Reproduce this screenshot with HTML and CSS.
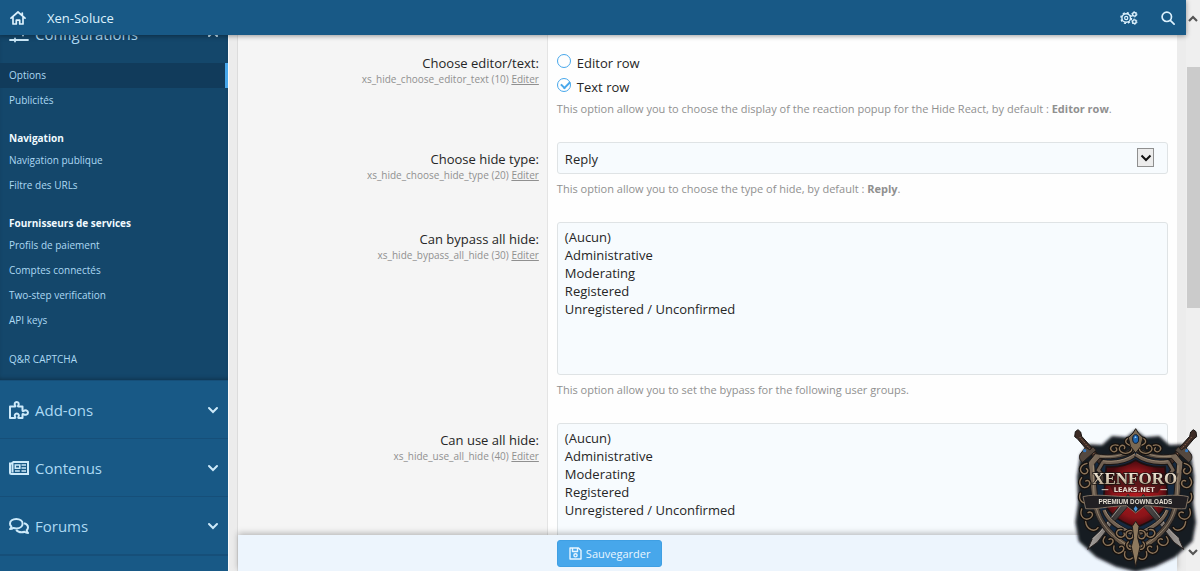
FILE: index.html
```html
<!DOCTYPE html>
<html lang="fr">
<head>
    <meta charset="UTF-8">
    <meta name="viewport" content="width=device-width, initial-scale=1.0">
    <title>Xen-Soluce - Options</title>
    <link rel="stylesheet" href="styles.css">
</head>
<body>
    <div class="app">
        <header class="header">
            <a href="#" class="header-icon" aria-label="Accueil">
                <svg width="16" height="14" viewBox="0 0 16 14" fill="none" stroke="currentColor" stroke-width="1.7" stroke-linejoin="round" stroke-linecap="round">
                    <path d="M1 7.2 8 1l7 6.2M12.3 2v2.5M3 6.5V13h3.3V9.2h3.4V13H13V6.5"/>
                </svg>
            </a>
            <a href="#" class="header-title">Xen-Soluce</a>
            <div class="header-tools">
                <a href="#" aria-label="Outils">
                    <svg width="18" height="14" viewBox="0 0 18 14" fill="none" stroke="currentColor">
                        <circle cx="6.2" cy="7" r="4.3" stroke-width="1.4"/>
                        <circle cx="6.2" cy="7" r="5.3" stroke-width="1.4" stroke-dasharray="2.1 2.06"/>
                        <circle cx="6.2" cy="7" r="1.6" stroke-width="1.2"/>
                        <circle cx="14.4" cy="3.3" r="1.8" stroke-width="1.4"/>
                        <circle cx="14.4" cy="3.3" r="2.6" stroke-width="1" stroke-dasharray="1.4 1.32"/>
                        <circle cx="14.4" cy="10.7" r="1.8" stroke-width="1.4"/>
                        <circle cx="14.4" cy="10.7" r="2.6" stroke-width="1" stroke-dasharray="1.4 1.32"/>
                    </svg>
                </a>
                <a href="#" aria-label="Rechercher">
                    <svg width="14" height="14" viewBox="0 0 14 14" fill="none" stroke="currentColor" stroke-width="1.7" stroke-linecap="round">
                        <circle cx="5.8" cy="5.8" r="4.7"/>
                        <path d="m9.3 9.3 3.8 3.8"/>
                    </svg>
                </a>
            </div>
        </header>

        <div class="main">
            <nav class="sidebar">
                <section class="section open">
                    <a href="#" class="section-title">
                        <svg width="20" height="18" viewBox="0 0 20 18" fill="none" stroke="currentColor" stroke-width="1.8" stroke-linecap="round">
                            <path d="M1 3h18M1 9h18M1 15h18M6 1.5v3M14 7.5v3M6 13.5v3"/>
                        </svg>
                        <span>Configurations</span>
                        <svg class="chevron" width="12" height="8" viewBox="0 0 12 8" fill="none" stroke="currentColor" stroke-width="2" stroke-linecap="round"><path d="m2 6 4-4 4 4"/></svg>
                    </a>
                    <ul>
                        <li><a href="#" class="active">Options</a></li>
                        <li><a href="#">Publicités</a></li>
                    </ul>
                    <h4>Navigation</h4>
                    <ul>
                        <li><a href="#">Navigation publique</a></li>
                        <li><a href="#">Filtre des URLs</a></li>
                    </ul>
                    <h4>Fournisseurs de services</h4>
                    <ul>
                        <li><a href="#">Profils de paiement</a></li>
                        <li><a href="#">Comptes connectés</a></li>
                        <li><a href="#">Two-step verification</a></li>
                        <li><a href="#">API keys</a></li>
                    </ul>
                    <ul class="last">
                        <li><a href="#">Q&amp;R CAPTCHA</a></li>
                    </ul>
                </section>
                <section class="section">
                    <a href="#" class="section-title">
                        <svg width="20" height="18" viewBox="0 0 20 18" fill="none" stroke="currentColor" stroke-width="2" stroke-linejoin="round">
                            <path d="M1 5.6h4.9c.6 0 .7-.6.3-1.1-1.2-1.5-.3-3.5 1.5-3.5s2.7 2 1.5 3.5c-.4.5-.3 1.1.3 1.1h4v4c0 .7.7.8 1.2.4 1.700-1.300 4.300-.5 4.300 1.600s-2.600 2.900-4.300 1.600c-.5-.4-1.200-.3-1.200.4V17H9.800c-.7 0-.7-.6-.3-1.200.9-1.400.1-3.200-1.700-3.200s-2.600 1.800-1.700 3.200c.4.600.3 1.200-.4 1.200H1z"/>
                        </svg>
                        <span>Add-ons</span>
                        <svg class="chevron" width="12" height="8" viewBox="0 0 12 8" fill="none" stroke="currentColor" stroke-width="2" stroke-linecap="round"><path d="m2 2 4 4 4-4"/></svg>
                    </a>
                </section>
                <section class="section">
                    <a href="#" class="section-title">
                        <svg width="20" height="14" viewBox="0 0 20 14" fill="none" stroke="currentColor" stroke-width="2">
                            <path d="M3.500 1H19v12H2.500C1.500 13 1 12.300 1 11.500V2.500h2.500M3.500 1v10.500"/>
                            <path d="M6.300 4h4.500v3.300H6.300zM12.500 4H17M12.500 7H17M6 10h4.800M12.500 10H17" stroke-width="1.600"/>
                        </svg>
                        <span>Contenus</span>
                        <svg class="chevron" width="12" height="8" viewBox="0 0 12 8" fill="none" stroke="currentColor" stroke-width="2" stroke-linecap="round"><path d="m2 2 4 4 4-4"/></svg>
                    </a>
                </section>
                <section class="section">
                    <a href="#" class="section-title">
                        <svg width="20" height="16" viewBox="0 0 20 16" fill="none" stroke="currentColor" stroke-width="2" stroke-linejoin="round">
                            <path d="M7.300 1c3.600 0 6.300 2 6.300 4.700s-2.700 4.700-6.300 4.700c-1 0-2-.2-2.800-.5-1 .8-2.200 1.200-3.500 1.200.8-.8 1.300-1.600 1.400-2.600C1.500 7.700 1 6.800 1 5.700 1 3 3.700 1 7.300 1z"/>
                            <path d="M15 5.300c2.300.6 4 2.200 4 4.200 0 1.100-.5 2-1.300 2.800.1 1 .6 1.800 1.300 2.600-1.300 0-2.500-.4-3.500-1.200-.9.300-1.800.5-2.800.5-2.400 0-4.400-.9-5.500-2.400"/>
                        </svg>
                        <span>Forums</span>
                        <svg class="chevron" width="12" height="8" viewBox="0 0 12 8" fill="none" stroke="currentColor" stroke-width="2" stroke-linecap="round"><path d="m2 2 4 4 4-4"/></svg>
                    </a>
                </section>
                <section class="section"></section>
            </nav>

            <form class="content">
                <div class="rows">
                    <div class="row">
                        <div class="label">
                            <span class="name" id="editor-label">Choose editor/text:</span>
                            <span class="hint">xs_hide_choose_editor_text (10) <a href="#">Editer</a></span>
                        </div>
                        <div class="field" role="radiogroup" aria-labelledby="editor-label">
                            <label class="choice"><input type="radio" name="editor" value="editor"> Editor row</label>
                            <label class="choice"><input type="radio" name="editor" value="text" checked> Text row</label>
                            <p class="explain">This option allow you to choose the display of the reaction popup for the Hide React, by default : <b>Editor row</b>.</p>
                        </div>
                    </div>
                    <div class="row row-input">
                        <div class="label">
                            <label class="name" for="type">Choose hide type:</label>
                            <span class="hint">xs_hide_choose_hide_type (20) <a href="#">Editer</a></span>
                        </div>
                        <div class="field">
                            <div class="dropdown">
                                <select id="type">
                                    <option>Reply</option>
                                </select>
                                <span class="arrow">
                                    <svg width="12" height="8" viewBox="0 0 12 8" fill="none" stroke="#111" stroke-width="2"><path d="m1.500 1.500 4.500 4.500 4.500-4.500"/></svg>
                                </span>
                            </div>
                            <p class="explain">This option allow you to choose the type of hide, by default : <b>Reply</b>.</p>
                        </div>
                    </div>
                    <div class="row row-input">
                        <div class="label">
                            <label class="name" for="bypass">Can bypass all hide:</label>
                            <span class="hint">xs_hide_bypass_all_hide (30) <a href="#">Editer</a></span>
                        </div>
                        <div class="field">
                            <select id="bypass" multiple size="8">
                                <option>(Aucun)</option>
                                <option>Administrative</option>
                                <option>Moderating</option>
                                <option>Registered</option>
                                <option>Unregistered / Unconfirmed</option>
                            </select>
                            <p class="explain">This option allow you to set the bypass for the following user groups.</p>
                        </div>
                    </div>
                    <div class="row row-input">
                        <div class="label">
                            <label class="name" for="use">Can use all hide:</label>
                            <span class="hint">xs_hide_use_all_hide (40) <a href="#">Editer</a></span>
                        </div>
                        <div class="field">
                            <select id="use" multiple size="8">
                                <option>(Aucun)</option>
                                <option>Administrative</option>
                                <option>Moderating</option>
                                <option>Registered</option>
                                <option>Unregistered / Unconfirmed</option>
                            </select>
                        </div>
                    </div>
                </div>
                <div class="submit">
                    <button type="submit">
                        <svg width="13" height="13" viewBox="0 0 13 13" fill="none" stroke="currentColor" stroke-width="1.400" stroke-linejoin="round">
                            <path d="M1 1h8.500L12 3.500V12H1zM3.500 1v3.500h5V1"/>
                            <circle cx="6.500" cy="8.300" r="1.600"/>
                        </svg>
                        Sauvegarder
                    </button>
                </div>
            </form>
        </div>
    </div>

    <div class="scrollbar">
        <svg width="10" height="7" viewBox="0 0 10 7" fill="none" stroke="#555" stroke-width="2.200"><path d="m1 6 4-4 4 4"/></svg>
        <div class="track"><div class="thumb"></div></div>
        <svg width="10" height="7" viewBox="0 0 10 7" fill="none" stroke="#555" stroke-width="2.200"><path d="m1 1 4 4 4-4"/></svg>
    </div>

    <svg class="badge" width="126" height="144" viewBox="40 36 378 432" role="img" aria-label="Xenforo Leaks.net">
        <defs>
            <linearGradient id="bronze" x1="0" y1="0" x2="1" y2="1">
                <stop offset="0" stop-color="#8a7865"/>
                <stop offset=".5" stop-color="#4a4039"/>
                <stop offset="1" stop-color="#7d6850"/>
            </linearGradient>
            <linearGradient id="steel" x1="0" y1="0" x2="1" y2="0">
                <stop offset="0" stop-color="#a7a3a0"/>
                <stop offset=".5" stop-color="#77716d"/>
                <stop offset=".55" stop-color="#393636"/>
                <stop offset="1" stop-color="#595452"/>
            </linearGradient>
            <radialGradient id="red">
                <stop offset="0" stop-color="#b51b20"/>
                <stop offset=".7" stop-color="#8b1419"/>
                <stop offset="1" stop-color="#45090e"/>
            </radialGradient>
            <linearGradient id="silver" x1="0" y1="0" x2="0" y2="1">
                <stop offset="0" stop-color="#fff8ea"/>
                <stop offset=".55" stop-color="#d5c7b2"/>
                <stop offset="1" stop-color="#a38f78"/>
            </linearGradient>
            <filter id="soft"><feGaussianBlur stdDeviation="4"/></filter>
            <g id="half">
                <!-- sword -->
                <path d="m205 238-80 105-27 28-14 32 29-21 24-31 82-93z" fill="url(#steel)" stroke="#27211f" stroke-width="3"/>
                <path d="m98 371 24-21 78-98" fill="none" stroke="#c7c0b8" stroke-width="2"/>
                <path d="m47 50 8-6 8 7 3 13 65 72-12 12-66-77-8-6z" fill="#3c2b25" stroke="#171311" stroke-width="3"/>
                <path d="m60 66 53 62" stroke="#8b664e" stroke-width="3" stroke-dasharray="5 4"/>
                <path d="m62 117 16-20 13 8 9-10 9 11-40 36c-10-7-12-16-7-25z" fill="#54483f" stroke="#231d1a" stroke-width="3"/>
                <!-- outer frame -->
                <path d="M226 91c-25 22-66 34-119 25l-21 26 10 104c4 62 35 119 130 171v-20c-80-44-108-91-112-148L105 147l15-17c45 5 81-4 106-20z" fill="url(#bronze)" stroke="#1c1817" stroke-width="3"/>
                <path d="M101 151c1 60-1 105 14 145 16 43 52 76 108 107M121 123c43 6 80-5 102-25" fill="none" stroke="#b19d82" stroke-width="2"/>
                <!-- inner frame -->
                <path d="M228 119c-28 20-60 27-98 22l-14 24c12 12 13 23 9 37M133 285c12 35 45 55 95 76" fill="none" stroke="#1b1716" stroke-width="16"/>
                <path d="M228 119c-28 20-60 27-98 22l-14 24c12 12 13 23 9 37M133 285c12 35 45 55 95 76" fill="none" stroke="#706052" stroke-width="9"/>
                <path d="M226 116c-27 18-59 26-96 21M136 285c14 31 45 51 90 70" fill="none" stroke="#b9a68c" stroke-width="2"/>
                <!-- scrollwork -->
                <g fill="none" stroke="#15110f" stroke-width="11" stroke-linecap="round">
                    <path d="M220 74c-18-13-30 8-15 14 14 4 17 18 2 25-18 7-35-8-25-19 8-7 17 0 12 7M175 91c-18-5-26 8-20 15 9 10 22 0 14-8"/>
                    <path d="M82 145c-21 5-25 22-12 30 12 5 19-8 10-14M66 188c-14 19 2 36 18 27 13-10 3-23-6-17M62 235c-8 22 10 35 24 25M66 282c-8 23 10 37 26 27 13-10 3-23-7-16M78 320c3 26 28 32 37 18"/>
                    <path d="M136 365c-13 15 1 33 18 23 13-9 3-21-6-15M163 393c-5 19 14 28 26 16 9-11-2-20-9-13M196 410c-6 19 10 29 22 19M225 352c-13-12-30-3-25 12 5 12 23 8 19-4M187 344c-15-3-22 11-11 20 12 7 22-2 17-10M206 381c-9 8-4 22 8 22"/>
                </g>
                <g fill="none" stroke="#8c7459" stroke-width="4" stroke-linecap="round">
                    <path d="M220 74c-18-13-30 8-15 14 14 4 17 18 2 25-18 7-35-8-25-19 8-7 17 0 12 7M175 91c-18-5-26 8-20 15 9 10 22 0 14-8"/>
                    <path d="M82 145c-21 5-25 22-12 30 12 5 19-8 10-14M66 188c-14 19 2 36 18 27 13-10 3-23-6-17M62 235c-8 22 10 35 24 25M66 282c-8 23 10 37 26 27 13-10 3-23-7-16M78 320c3 26 28 32 37 18"/>
                    <path d="M136 365c-13 15 1 33 18 23 13-9 3-21-6-15M163 393c-5 19 14 28 26 16 9-11-2-20-9-13M196 410c-6 19 10 29 22 19M225 352c-13-12-30-3-25 12 5 12 23 8 19-4M187 344c-15-3-22 11-11 20 12 7 22-2 17-10M206 381c-9 8-4 22 8 22"/>
                </g>
                <circle cx="75" cy="107" r="5" fill="#377ac0"/>
            </g>
        </defs>
        <path d="m228 45-28 22-43-4-30 27-40-2-25 32-10 65 3 80-8 57 10 57 53 48 59 28 59 15 59-15 59-28 53-48 10-57-8-57 3-80-10-65-25-32-40 2-30-27-43 4z" fill="#181b24" filter="url(#soft)"/>
        <path d="M228 93c-27 19-66 32-122 24l-21 29 12 110c7 68 48 117 131 162 83-45 124-94 131-162l12-110-21-29c-56 8-95-5-122-24z" fill="#14283f"/>
        <path d="M228 135c-24 16-55 22-88 20l-8 92c3 43 39 69 96 91 57-22 93-48 96-91l-8-92c-33 2-64-4-88-20z" fill="url(#red)" stroke="#1d1011" stroke-width="5"/>
        <use href="#half"/>
        <use href="#half" transform="matrix(-1 0 0 1 456 0)"/>
        <!-- crest and base -->
        <path d="m228 41 8 13 14 14-7 27-15 19-15-19-7-27 14-14z" fill="#796852" stroke="#1b1716" stroke-width="3"/>
        <ellipse cx="228" cy="72" rx="9" ry="13" fill="#1e65af" stroke="#101c2d" stroke-width="3"/>
        <path d="m224 70 3-7 4 5" fill="#a7d5f5"/>
        <path d="m218 334 10-15 10 15-4 34 7 27-13 60-13-60 7-27z" fill="#8e795e" stroke="#211b18" stroke-width="3"/>
        <!-- lettering -->
        <path d="M103 175h254l-12 33-40 5-10 20H161l-10-20-42-5z" fill="#171314" opacity=".5"/>
        <path d="M70 245c41-10 82 0 158 1 76-1 117-11 158-1l-8 36c-36 3-59-7-122-9l-28 22-28-22c-63 2-86 12-122 9z" fill="#211f22" stroke="#7f7061" stroke-width="3"/>
        <path d="m228 273 6 8-6 9-6-9z" fill="#4b97dd"/>
        <path d="M126 224h20M302 224h20" stroke="#d8cebf" stroke-width="3"/>
        <text class="badge-name" x="225" y="207">XENFORO</text>
        <text class="badge-site" x="224" y="231">LEAKS.NET</text>
        <text class="badge-tag" x="227" y="266">PREMIUM DOWNLOADS</text>
    </svg>
</body>
</html>
```
FILE: styles.css
```css
* {
    box-sizing: border-box;
    padding: 0;
    margin: 0;
}
body {
    display: flex;
    height: 100vh;
    overflow: hidden;
    background: #ececec;
    color: #262626;
    font-family: "Open Sans", "Noto Sans", sans-serif;
    font-size: 13px;
    line-height: 20px;
}
a {
    color: inherit;
    text-decoration: none;
}
ul {
    list-style: none;
}
svg {
    display: block;
    flex: none;
}
.app {
    flex: 1;
    min-width: 0;
    display: flex;
    flex-direction: column;
}

/* header */
.header {
    position: relative;
    z-index: 2;
    flex: none;
    display: flex;
    align-items: center;
    height: 35px;
    padding: 0 11px 0 10px;
    background: #185986;
    color: #dcf1fd;
    box-shadow: 0 1px 5px rgba(0, 0, 0, .4);
}
.header-title {
    margin-left: 21px;
    font-size: 13px;
}
.header-tools {
    display: flex;
    gap: 23px;
    margin-left: auto;
}

/* sidebar */
.main {
    flex: 1;
    min-height: 0;
    display: flex;
    overflow: hidden;
}
.sidebar {
    flex: none;
    width: 229px;
    margin-top: -30px;
    overflow: hidden;
    background: #185986;
    color: #add9f3;
    font-size: 10px;
    border-right: 1px solid #fafafa;
}
.section {
    border-bottom: 1px solid #164f79;
}
.section.open {
    padding-bottom: 8px;
    background: #14476b;
    box-shadow: inset 0 -3px 4px -2px rgba(0, 0, 0, .3);
}
.section-title {
    display: flex;
    align-items: center;
    height: 57px;
    padding: 0 9px;
    font-size: 15px;
}
.section.open .section-title {
    height: 58px;
}
.section-title svg {
    color: #cdeafa;
}
.section-title span {
    margin-left: 6px;
}
.section-title .chevron {
    margin-left: auto;
}
.sidebar li a {
    display: block;
    padding: 0 9px;
    line-height: 25px;
}
.sidebar li .active {
    background: #113b5b;
    border-right: 3px solid #47a7eb;
}
.sidebar h4 {
    margin-top: 15px;
    padding: 0 9px;
    color: #f0faff;
}
.sidebar .last {
    margin-top: 14px;
}

/* options form */
.content {
    flex: 1;
    min-width: 0;
    display: flex;
    flex-direction: column;
    margin: 0 9px 0 8px;
    border-left: 1px solid #dcdcdc;
}
.rows {
    flex: 1;
    min-height: 0;
    overflow: hidden;
    background: linear-gradient(to right, #f5f5f5 33%, #fefefe 33%);
}
.row {
    display: flex;
}
.label {
    flex: none;
    width: 33%;
    padding: 18px 8px 0;
    text-align: right;
    border-right: 1px solid #e4e4e4;
}
.row-input .label {
    padding-top: 7px;
}
.name, .hint {
    display: block;
}
.hint {
    color: #909090;
    font-size: 10px;
    line-height: 13px;
}
.hint a {
    text-decoration: underline;
}
.field {
    flex: 1;
    min-width: 0;
    padding: 16px 9px 24px;
}
.row-input .field {
    padding-top: 0;
}
.choice {
    display: flex;
    align-items: center;
    gap: 6px;
    height: 24px;
}
.choice input {
    appearance: none;
    position: relative;
    width: 14px;
    height: 14px;
    margin-bottom: 4px;
    border: 1px solid #47a7eb;
    border-radius: 50%;
}
.choice input:checked::after {
    content: "";
    position: absolute;
    left: 3px;
    top: 2px;
    width: 7px;
    height: 4px;
    border: solid #47a7eb;
    border-width: 0 0 2px 2px;
    transform: rotate(-45deg);
}
.explain {
    margin-top: 1px;
    color: #909090;
    font-size: 11px;
    line-height: 18px;
}
.row-input .explain {
    margin-top: 6px;
}
select {
    appearance: none;
    display: block;
    width: 100%;
    height: 32px;
    padding: 1px 7px 0;
    background: #f7fbfe;
    border: 1px solid #dfe3e5;
    border-radius: 3px;
    color: #262626;
    font: inherit;
}
select[multiple] {
    height: 153px;
    padding: 5px 7px;
    overflow: hidden;
}
option {
    padding: 0;
    min-height: 18px;
    line-height: 18px;
}
.dropdown {
    position: relative;
}
.arrow {
    position: absolute;
    top: 6px;
    right: 14px;
    display: flex;
    align-items: center;
    justify-content: center;
    width: 17px;
    height: 19px;
    background: #ececec;
    border: 1px solid #8f8f8f;
    pointer-events: none;
}
.submit {
    position: relative;
    flex: none;
    height: 36px;
    padding: 5px 0 0 calc(33% + 9px);
    background: #edf5fd;
    box-shadow: 0 -2px 6px rgba(0, 0, 0, .25);
}
.submit button {
    display: flex;
    align-items: center;
    gap: 4px;
    height: 27px;
    padding: 0 11px;
    background: #47a7eb;
    border: 1px solid #3f9fe3;
    border-radius: 3px;
    color: #e9f6ff;
    font: inherit;
    font-size: 11px;
}

/* window scrollbar */
.scrollbar {
    flex: none;
    display: flex;
    flex-direction: column;
    align-items: center;
    width: 14px;
    padding: 15px 0;
    background: #efefef;
}
.track {
    flex: 1;
    width: 100%;
    padding: 45px 0 0 1px;
}
.thumb {
    height: 50%;
    background: #cbcbcb;
}

.badge {
    position: fixed;
    right: 1px;
    bottom: 0;
}
.badge text {
    text-anchor: middle;
    font-weight: bold;
}
.badge-name {
    fill: url(#silver);
    stroke: #1a1513;
    stroke-width: 4px;
    paint-order: stroke;
    font-family: "Liberation Serif", serif;
    font-size: 51px;
}
.badge-site {
    fill: #e6dfd3;
    font-family: "DejaVu Sans", sans-serif;
    font-size: 20px;
}
.badge-tag {
    fill: #e6dfd3;
    font-family: "Liberation Sans", sans-serif;
    font-size: 19px;
}
```
